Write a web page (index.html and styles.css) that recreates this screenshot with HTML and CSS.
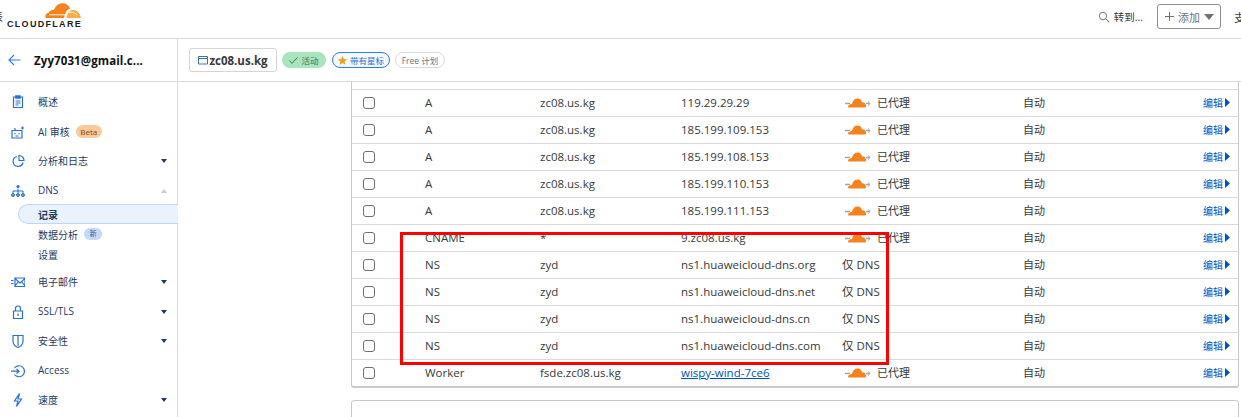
FILE: index.html
```html
<!DOCTYPE html>
<html lang="zh-CN">
<head>
<meta charset="utf-8">
<title>Cloudflare DNS</title>
<link rel="stylesheet" href="styles.css">
</head>
<body>
<svg width="0" height="0" class="defs">
  <symbol id="proxied" viewBox="0 0 26 10">
    <path d="M0 5.500h5M21 5.500h3.500" stroke="#a3a3a3" stroke-width="1.400" fill="none"/>
    <path d="M23 3.500l2.200 2-2.200 2" stroke="#a3a3a3" stroke-width="1" fill="none"/>
    <path d="M4 9.500c-1.200 0-1.500-2 .5-2.500 .5-1 1.500-1.200 2.300-.8C7.800 2.500 9.500 .5 12.500 .5c2.500 0 4 1.500 4.500 3.800 1.800-.3 3.500 1 4 3 .3 1-.2 2.200-1 2.200z" fill="#f6821f"/>
  </symbol>
  <symbol id="caret" viewBox="0 0 5 9"><path d="M0 0l5 4.500-5 4.500z" fill="#0051c3"/></symbol>
</svg>
<header class="topbar">
  <span class="clip-left">表</span>
  <div class="logo">
    <svg class="logo-cloud" viewBox="0 0 36 15" width="36" height="15">
      <path d="M.6 15c-1-2.500.6-5 3-5.300 .8-2 3-3.200 5.400-2.700C10.500 3 13.500 .3 17.500 .3c3.500 0 6.500 2 7.700 5.200-2.500.7-4.200 2.500-5 5-.4 1.400-.8 3-1.200 4.500z" fill="#f6821f"/>
      <path d="M21.500 15c.5-4 2.500-7.500 6-8 4.200-.3 7.800 3 8.300 8z" fill="#fbad41"/>
      <path d="M4 11.800h16.500M24 9.500c3-.8 6 .2 8 2.300" stroke="#fff" stroke-width=".9" fill="none"/>
    </svg>
    <span class="logo-text">CLOUDFLARE</span>
  </div>
  <div class="top-actions">
    <svg class="search-icon" viewBox="0 0 12 12" width="12" height="12"><circle cx="5" cy="5" r="3.600" fill="none" stroke="#8b8b8b" stroke-width="1.100"/><path d="M7.700 7.700l3.600 3.600" stroke="#8b8b8b" stroke-width="1.200"/></svg>
    <span class="goto">转到...</span>
    <button class="add-btn"><svg class="plus" viewBox="0 0 9 9" width="9" height="9"><path d="M4.500 0v9M0 4.500h9" stroke="#6d7278" stroke-width="1"/></svg><span>添加</span><span class="add-caret"></span></button>
    <span class="clip-right">支</span>
  </div>
</header>
<section class="subbar">
  <div class="account">
    <svg viewBox="0 0 13 12" width="13" height="12"><path d="M12.500 6H1M6 1L1 6l5 5" fill="none" stroke="#2f7bf5" stroke-width="1.100"/></svg>
    <strong class="account-name">Zyy7031@gmail.c...</strong>
  </div>
  <div class="zone">
    <div class="zone-box">
      <svg viewBox="0 0 10 10" width="10" height="10"><path d="M.5 1.500h9v7.500h-9zM.5 3.500h9" fill="none" stroke="#2c5fb3" stroke-width=".9"/></svg>
      <b>zc08.us.kg</b>
    </div>
    <span class="pill pill-green"><svg viewBox="0 0 9 7" width="9" height="7"><path d="M.5 3.500l2.500 2.800L8.500.5" fill="none" stroke="#2c6b4a" stroke-width=".9"/></svg>活动</span>
    <span class="pill pill-blue"><svg viewBox="0 0 10 10" width="9" height="9"><path d="M5 0l1.500 3.400 3.500.3-2.700 2.300.9 3.600L5 7.700 1.800 9.600l.9-3.600L0 3.700l3.500-.3z" fill="#e8a318"/></svg>带有星标</span>
    <span class="pill pill-plain">Free 计划</span>
  </div>
</section>
<div class="body-row">
  <nav class="sidebar">
    <a class="nav-item"><svg class="nav-icon" viewBox="0 0 14 14"><path d="M2.500 2h9v10.500h-9zM4.800 .8h4.400v2.400H4.800zM4.500 6h5M4.500 8h5M4.500 10h3" fill="none" stroke="#2c6fd1" stroke-width="1.200"/></svg><span>概述</span></a>
    <a class="nav-item"><svg class="nav-icon" viewBox="0 0 14 14"><path d="M1 5.500h10V13H1zM4 8v1.200M8 8v1.200M4.500 11h3M4 5.500V3M11.500 1.500v3M10 3h3" fill="none" stroke="#2c6fd1" stroke-width="1.200"/></svg><span>AI 审核</span><em class="badge badge-beta">Beta</em></a>
    <a class="nav-item"><svg class="nav-icon" viewBox="0 0 14 14"><path d="M6 2.500a5 5 0 1 0 6 6M8 1.500v5h5a5 5 0 0 0-5-5z" fill="none" stroke="#2c6fd1" stroke-width="1.200"/></svg><span>分析和日志</span><i class="nav-caret"></i></a>
    <a class="nav-item"><svg class="nav-icon" viewBox="0 0 14 14"><circle cx="7" cy="2.500" r="1.600" fill="#2c6fd1"/><path d="M7 4.500v5M2 9.500V7h10v2.500" fill="none" stroke="#2c6fd1"/><circle cx="2" cy="11" r="1.500" fill="#6f9fe0" stroke="#2c6fd1"/><circle cx="7" cy="11" r="1.500" fill="#6f9fe0" stroke="#2c6fd1"/><circle cx="12" cy="11" r="1.500" fill="#6f9fe0" stroke="#2c6fd1"/></svg><span>DNS</span><i class="nav-caret nav-caret-up"></i></a>
    <div class="subnav">
      <a class="sub-item sub-active">记录</a>
      <a class="sub-item">数据分析<em class="badge badge-new">新</em></a>
      <a class="sub-item">设置</a>
    </div>
    <a class="nav-item"><svg class="nav-icon" viewBox="0 0 14 14"><path d="M4 3h10v8.500H4zM4 3.500l5 4.500 5-4.500M4 11l3.500-4.500M14 11l-3.500-4.500M0 5.500h2.500M0 8.500h2.500" fill="none" stroke="#2c6fd1" stroke-width="1.200"/></svg><span>电子邮件</span><i class="nav-caret"></i></a>
    <a class="nav-item"><svg class="nav-icon" viewBox="0 0 14 14"><path d="M2.500 6h9v7.500h-9zM4.500 6V3.500a2.500 2.500 0 0 1 5 0V6M7 8.500v2.500" fill="none" stroke="#2c6fd1" stroke-width="1.200"/></svg><span>SSL/TLS</span><i class="nav-caret"></i></a>
    <a class="nav-item"><svg class="nav-icon" viewBox="0 0 14 14"><path d="M2 1.500h10v5.500c0 3-2.500 5.500-5 6.500-2.500-1-5-3.500-5-6.500zM7 2v10" fill="none" stroke="#2c6fd1" stroke-width="1.200"/></svg><span>安全性</span><i class="nav-caret"></i></a>
    <a class="nav-item"><svg class="nav-icon" viewBox="0 0 14 14"><path d="M3.500 4a5.500 5.500 0 1 1 0 6.500M0 7.200h8M5.500 5l2.500 2.200-2.500 2.300" fill="none" stroke="#2c6fd1" stroke-width="1.200"/></svg><span>Access</span></a>
    <a class="nav-item"><svg class="nav-icon" viewBox="0 0 14 14"><path d="M8.500 .5L3.500 8h3.500l-1.500 5.500L10.500 6H7z" fill="none" stroke="#2c6fd1" stroke-width="1.200"/></svg><span>速度</span><i class="nav-caret"></i></a>
  </nav>
  <main class="content">
    <div class="records">
      <div class="row"><span class="check"></span><span>A</span><span>zc08.us.kg</span><span>119.29.29.29</span><span class="proxy"><svg class="cloud"><use href="#proxied"/></svg>已代理</span><span class="ttl">自动</span><a class="edit">编辑<svg class="edit-caret"><use href="#caret"/></svg></a></div>
      <div class="row"><span class="check"></span><span>A</span><span>zc08.us.kg</span><span>185.199.109.153</span><span class="proxy"><svg class="cloud"><use href="#proxied"/></svg>已代理</span><span class="ttl">自动</span><a class="edit">编辑<svg class="edit-caret"><use href="#caret"/></svg></a></div>
      <div class="row"><span class="check"></span><span>A</span><span>zc08.us.kg</span><span>185.199.108.153</span><span class="proxy"><svg class="cloud"><use href="#proxied"/></svg>已代理</span><span class="ttl">自动</span><a class="edit">编辑<svg class="edit-caret"><use href="#caret"/></svg></a></div>
      <div class="row"><span class="check"></span><span>A</span><span>zc08.us.kg</span><span>185.199.110.153</span><span class="proxy"><svg class="cloud"><use href="#proxied"/></svg>已代理</span><span class="ttl">自动</span><a class="edit">编辑<svg class="edit-caret"><use href="#caret"/></svg></a></div>
      <div class="row"><span class="check"></span><span>A</span><span>zc08.us.kg</span><span>185.199.111.153</span><span class="proxy"><svg class="cloud"><use href="#proxied"/></svg>已代理</span><span class="ttl">自动</span><a class="edit">编辑<svg class="edit-caret"><use href="#caret"/></svg></a></div>
      <div class="row"><span class="check"></span><span>CNAME</span><span>*</span><span>9.zc08.us.kg</span><span class="proxy"><svg class="cloud"><use href="#proxied"/></svg>已代理</span><span class="ttl">自动</span><a class="edit">编辑<svg class="edit-caret"><use href="#caret"/></svg></a></div>
      <div class="row"><span class="check"></span><span>NS</span><span>zyd</span><span>ns1.huaweicloud-dns.org</span><span class="dns-only">仅 DNS</span><span class="ttl">自动</span><a class="edit">编辑<svg class="edit-caret"><use href="#caret"/></svg></a></div>
      <div class="row"><span class="check"></span><span>NS</span><span>zyd</span><span>ns1.huaweicloud-dns.net</span><span class="dns-only">仅 DNS</span><span class="ttl">自动</span><a class="edit">编辑<svg class="edit-caret"><use href="#caret"/></svg></a></div>
      <div class="row"><span class="check"></span><span>NS</span><span>zyd</span><span>ns1.huaweicloud-dns.cn</span><span class="dns-only">仅 DNS</span><span class="ttl">自动</span><a class="edit">编辑<svg class="edit-caret"><use href="#caret"/></svg></a></div>
      <div class="row"><span class="check"></span><span>NS</span><span>zyd</span><span>ns1.huaweicloud-dns.com</span><span class="dns-only">仅 DNS</span><span class="ttl">自动</span><a class="edit">编辑<svg class="edit-caret"><use href="#caret"/></svg></a></div>
      <div class="row"><span class="check"></span><span>Worker</span><span>fsde.zc08.us.kg</span><a class="worker-link">wispy-wind-7ce6</a><span class="proxy"><svg class="cloud"><use href="#proxied"/></svg>已代理</span><span class="ttl">自动</span><a class="edit">编辑<svg class="edit-caret"><use href="#caret"/></svg></a></div>
    </div>
    <div class="next-card"></div>
  </main>
</div>
<div class="highlight"></div>
</body>
</html>
```
FILE: styles.css
```css
* { box-sizing: border-box; }
html, body { margin: 0; height: 417px; overflow: hidden; background: #fff; }
body {
  position: relative;
  font-family: "Open Sans", "Noto Sans CJK SC", sans-serif;
  font-size: 11.5px;
  color: #36393a;
}
.defs { position: absolute; }
.topbar {
  height: 39px;
  display: flex;
  align-items: center;
  border-bottom: 1px solid #d9d9d9;
  overflow: hidden;
}
.clip-left { margin: 0 0 6px -8px; width: 15px; font-size: 11px; flex: none; }
.logo { position: relative; width: 75px; height: 38px; flex: none; }
.logo-cloud { position: absolute; left: 38px; top: 3px; }
.logo-text {
  position: absolute;
  left: 0;
  top: 19px;
  font-family: "Liberation Sans", sans-serif;
  font-weight: 700;
  font-size: 9px;
  line-height: 10px;
  letter-spacing: 1.3px;
  color: #1d1d1d;
  white-space: nowrap;
}
.top-actions { margin-left: auto; margin-bottom: 5px; display: flex; align-items: center; }
.search-icon { margin-right: 4px; }
.goto { margin-right: 14px; font-size: 10.5px; }
.add-btn {
  width: 64px;
  height: 25px;
  padding: 0 0 0 7px;
  display: flex;
  align-items: center;
  background: #fff;
  border: 1px solid #8e8e8e;
  border-radius: 3px;
  font: inherit;
  font-size: 11px;
  color: #6d7278;
}
.plus { margin-right: 4px; flex: none; }
.add-caret {
  margin-left: 4px;
  border: 5px solid transparent;
  border-top: 6px solid #6d7278;
  border-bottom: 0;
}
.clip-right { margin-left: 13px; margin-right: -5px; width: 12px; font-size: 11px; }
.subbar {
  height: 43px;
  display: flex;
  border-bottom: 1px solid #d9d9d9;
}
.account {
  width: 178px;
  flex: none;
  display: flex;
  align-items: center;
  gap: 13px;
  padding-left: 8px;
  border-right: 1px solid #d9d9d9;
}
.account-name { font-size: 11.5px; color: #111; letter-spacing: .1px; }
.zone { display: flex; align-items: center; padding-left: 11px; }
.zone-box {
  width: 88px;
  height: 24px;
  display: flex;
  align-items: center;
  justify-content: center;
  gap: 1px;
  border: 1px solid #d5d5d5;
  border-radius: 3px;
  margin-right: 5px;
}
.zone-box b { font-size: 11.5px; color: #36393a; }
.pill {
  height: 16px;
  display: flex;
  align-items: center;
  justify-content: center;
  gap: 3px;
  border-radius: 8px;
  font-size: 8.5px;
  margin-right: 5px;
}
.pill-green { width: 44px; margin-right: 6px; background: #a9e4bc; color: #3d6e52; }
.pill-blue { width: 58px; border: 1px solid #2f7bf5; color: #2f6fd1; background: #f4f8ff; }
.pill-plain { width: 50px; border: 1px solid #d9d9d9; color: #6d7278; margin-right: 0; }
.body-row { display: flex; height: 335px; overflow: hidden; }
.sidebar {
  width: 178px;
  flex: none;
  padding-top: 5px;
  border-right: 1px solid #d9d9d9;
  color: #1f3a63;
  font-size: 10px;
}
.nav-item {
  height: 29.5px;
  display: flex;
  align-items: center;
  position: relative;
  padding-left: 38px;
}
.nav-icon { position: absolute; left: 11px; top: 8px; width: 14px; height: 14px; }
.nav-caret {
  position: absolute;
  left: 161px;
  top: 13px;
  border: 3.500px solid transparent;
  border-top: 4px solid #1f3a63;
  border-bottom: 0;
}
.nav-caret-up { border-top: 0; border-bottom: 4px solid #c8ccd2; }
.badge { font-style: normal; border-radius: 7px; }
.badge-beta {
  margin-left: 6px;
  width: 26px;
  height: 13px;
  line-height: 13px;
  text-align: center;
  font-size: 8px;
  background: #fbc99a;
  color: #7a4a26;
}
.badge-new {
  margin-left: 6px;
  width: 18px;
  height: 12px;
  line-height: 12px;
  text-align: center;
  font-size: 7px;
  background: #c3d9f7;
  color: #3d5f8f;
}
.subnav { margin: -1px 0 3px; padding-left: 18px; }
.sub-item {
  height: 20px;
  display: flex;
  align-items: center;
  padding-left: 20px;
  margin-right: -1px;
}
.sub-active {
  background: #eaf2fe;
  border: 1px solid #bcd7fb;
  border-right: 0;
  border-radius: 10px 0 0 10px;
  padding-left: 19px;
  font-weight: 700;
  color: #1f3a63;
}
.content { flex: 1; min-width: 0; padding: 0 2px 0 173px; }
.records {
  border: 1px solid #c9c9c9;
  border-width: 0 1px 2px 1px;
  border-radius: 0 0 3px 3px;
  padding-top: 7px;
}
.row {
  height: 27px;
  display: grid;
  grid-template-columns: 62px 115px 141px 161px 181px 180px 1fr;
  align-items: center;
  border-top: 1px solid #d9d9d9;
  padding: 0 0 2px 11px;
  white-space: nowrap;
}
.check {
  width: 12px;
  height: 12px;
  margin-top: 2px;
  border: 1px solid #6f6f6f;
  border-radius: 3px;
}
.proxy { display: flex; align-items: center; gap: 6px; padding-left: 3px; font-size: 11px; }
.cloud { width: 26px; height: 10px; flex: none; margin-top: 2px; }
.ttl { font-size: 11px; }
.dns-only { color: #36393a; }
.edit { display: flex; align-items: center; gap: 2px; font-size: 10px; color: #0051c3; }
.edit-caret { width: 5px; height: 9px; }
.worker-link { color: #0051c3; text-decoration: underline; }
.next-card {
  height: 30px;
  margin-top: 12px;
  border: 1px solid #c9c9c9;
  border-radius: 3px;
}
.highlight {
  position: absolute;
  left: 400px;
  top: 232px;
  width: 489px;
  height: 133px;
  border: 3.500px solid #ff0000;
}
```
